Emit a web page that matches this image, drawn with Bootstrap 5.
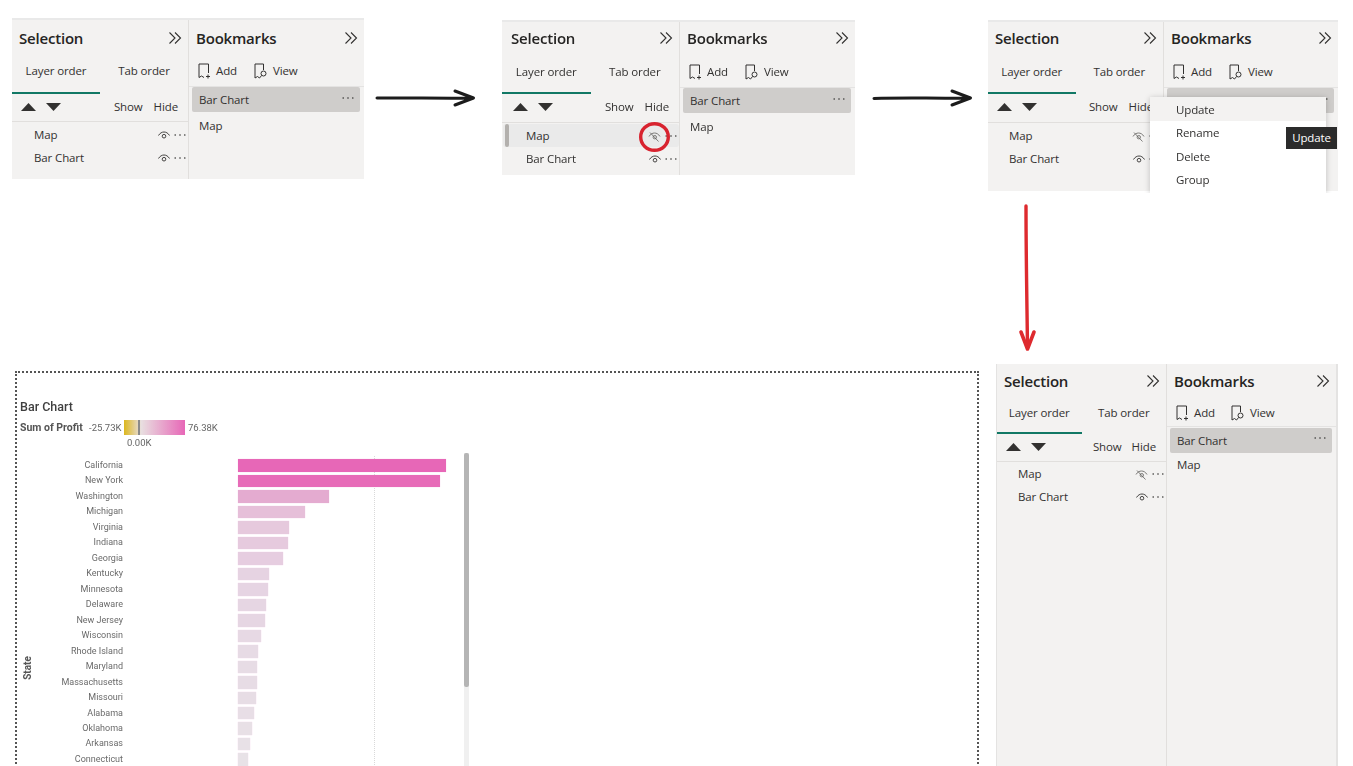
<!DOCTYPE html>
<html lang="en">
<head>
<meta charset="utf-8">
<title>Bookmarks workflow</title>
<link rel="stylesheet" href="https://cdn.jsdelivr.net/npm/bootstrap@5.3.0/dist/css/bootstrap.min.css">
<style>
html,body{margin:0;background:#fff;overflow:hidden}
.desk{position:relative;width:1353px;height:766px;overflow:hidden;font-family:"Open Sans","Noto Sans",sans-serif;color:#323130;filter:blur(.35px)}
.pbi{position:absolute;background:#f3f2f1;border-top:2px solid #e9e9e9;overflow:hidden;font-size:11.5px;letter-spacing:-.12px}
.pbi-a{left:12px;top:18px;width:352px;height:161px}
.pbi-b{left:502px;top:20px;width:353px;height:155px}
.pbi-c{left:988px;top:20px;width:350px;height:171px;overflow:visible}
.pbi-d{left:996px;top:364px;width:342px;height:402px;border-top:0;border-left:1px solid #e4e3e2;border-right:2px solid #e4e3e2}
.pane-sel{width:177px;flex:none;border-right:1px solid #e1dfdd}
.pane-book{flex:1 1 auto;min-width:0}
.pbi-b .pane-sel{width:178px}
.pbi-c .pane-sel{width:176px}
.pbi-d .pane-sel{width:170px}
.pane-head{height:36px;padding:0 6px 0 7px;flex:none}
.pane-book .pane-head{padding:0 6px 0 7px}
.pbi-b .pane-head,.pbi-c .pane-head{padding-bottom:4px}
.pbi-b .pane-sel .pane-head{padding-left:9px}
.pane-name{font-size:15px;font-weight:600;letter-spacing:-.2px;color:#252423}
.tabs-row{height:38px;flex:none}
.pbi-b .tabs-row,.pbi-c .tabs-row{height:36px}
.tab-one{flex:1 1 50%;display:flex;align-items:center;justify-content:center;padding-bottom:6px;border-bottom:2px solid transparent}
.pbi-d .tab-one{padding-bottom:4px}
.tab-one.is-on{border-bottom-color:#117865}
.ctl-row{height:28px;flex:none;padding:0 10px 2px 9px;border-bottom:1px solid #e1dfdd}
.pbi-b .ctl-row,.pbi-c .ctl-row{height:29px;padding-bottom:2px}
.pbi-d .ctl-row{padding-bottom:2px}
.pbi-b .ctl-row{padding-left:11px}
.ctl-row .gap-show{margin-right:11px}
.pbi-d .gap-show{margin-right:10px!important}
.tri{margin-right:10px}
.layer-row{height:23px;margin:1px 0 0;padding:1px 2px 0 22px;position:relative}
.layer-row+.layer-row{margin-top:0}
.pbi-b .layer-row{padding-left:24px}
.pbi-c .layer-row{padding-left:21px}
.pbi-d .layer-row{padding-left:21px;margin-top:0}
.layer-row.is-hot{background:#eaeaea;border-radius:3px;margin-left:1px;padding-left:23px}
.layer-row.is-hot::before{content:"";position:absolute;left:2px;top:0;bottom:0;width:4px;background:#b3b0ad;border-radius:2px}
.add-row{height:30px;flex:none;padding:0 0 0 9px;border-bottom:1px solid #e4e3e2;gap:17px}
.pbi-a .add-row{height:31px}
.pbi-b .add-row,.pbi-c .add-row{padding-bottom:2px}
.add-one{gap:5px}
.mark-list{--bs-list-group-bg:transparent;--bs-list-group-border-width:0;border-radius:0}
.mark-row{height:25px;padding:0 6px 0 7px;margin:0 4px 0 3px;background:transparent;color:#323130;font-size:11.500px}
.mark-row.is-on{background:#cfcdcb;border-radius:2px}
.mark-row+.mark-row{height:27px;padding-top:0}
.pbi-d .pane-head{height:34px}
.pbi-d .tabs-row{height:36px}
.pbi-d .add-row{height:29px;padding-top:2px;gap:16px}
.pbi-d .mark-list{margin-top:1px}
.pbi-d .mark-row{height:24.500px}
.pbi-d .mark-row+.mark-row{height:25px}
.pbi-menu{position:absolute;left:162px;top:75px;width:176px;height:96px;padding:0;margin:0;border:0;border-radius:0;background:#fff;box-shadow:0 1px 6px rgba(0,0,0,.22);clip-path:inset(-8px -8px 0 -8px);min-width:0;display:block;font-size:11.500px;z-index:2}
.pbi-menu .dropdown-item{height:23.500px;padding:0 0 0 26px;display:flex;align-items:center;color:#323130;font-size:11.500px;letter-spacing:-.12px}
.pbi-menu .dropdown-item.is-hot{background:#f3f2f1;height:24px;padding-top:2px}
.pbi-tip{position:absolute;left:298px;top:105px;width:51px;height:22px;background:#2b2b2b;color:#fff;display:flex;align-items:center;justify-content:center;font-size:11.500px;z-index:3}
.flow-arrow{position:absolute;overflow:visible;stroke-linejoin:round;stroke-linecap:round}
.ring{position:absolute;left:639px;top:122px;overflow:visible;z-index:4}
.viz{position:absolute;left:15px;top:371px;width:964px;height:420px;border:2px dotted #555;padding:26px 0 0 3px;font-family:Roboto,"Liberation Sans",sans-serif;color:#666}
.viz-name{font-size:12.5px;line-height:16px;font-weight:500;color:#3f3f3f}
.legend-row{height:15px;margin-top:5px;font-size:9.5px;line-height:15px}
.legend-name{width:69px;font-size:10.5px;font-weight:700;color:#555}
.legend-min{width:35px}
.legend-ramp{position:relative;width:61px;height:15px;margin-right:3px;background:linear-gradient(90deg,#dcb71e 0,#e8dfe0 28%,#e767b7 100%)}
.legend-ramp::after{content:"";position:absolute;left:14px;top:0;bottom:0;width:2px;background:#8a8a8a}
.legend-zero{height:12px;margin:2px 0 0 107px;font-size:9.5px;line-height:12px}
.bars{position:relative;z-index:1;margin-top:9px}
.bar-line{height:15.47px}
.bar-name{width:103px;flex:none;text-align:right;font-size:9px;line-height:15.47px;color:#6a6a6a}
.bar-fill{height:12.5px;margin-left:115px;box-shadow:0 0 1px rgba(231,103,183,.35)}
.state-name{position:absolute;left:-1px;top:289px;font-size:10px;font-weight:700;color:#555;transform:rotate(-90deg);line-height:12px}
.guide{position:absolute;left:356.5px;top:83px;bottom:0;border-left:1px dotted #d9d9d9}
.rail{position:absolute;left:447px;top:80px;bottom:0;width:5px;background:#f0f0f0}
.rail-thumb{height:234px;background:#b5b5b5;border-radius:2px}
</style>
</head>
<body>
<svg width="0" height="0" class="d-block" aria-hidden="true">
<defs>
<symbol id="i-chev" viewBox="0 0 14 14"><path d="M1.5 1.5 7 7l-5.500 5.500M7 1.500 12.500 7 7 12.500" fill="none" stroke="currentColor" stroke-width="1.100"/></symbol>
<symbol id="i-up" viewBox="0 0 15 8"><path d="M7.500 0 15 8H0z" fill="currentColor"/></symbol>
<symbol id="i-down" viewBox="0 0 15 8"><path d="M0 0h15L7.500 8z" fill="currentColor"/></symbol>
<symbol id="i-add" viewBox="0 0 13 16"><path d="M1 14.500V1h9.500v9M1 14.500 3.500 13 6 14.500" fill="none" stroke="currentColor" stroke-width="1"/><path d="M10 11.500v4M8 13.500h4" stroke="currentColor" stroke-width="1"/></symbol>
<symbol id="i-view" viewBox="0 0 14 16"><path d="M1 15V1h8.500v6M1 15l2.500-1.500L5.500 15" fill="none" stroke="currentColor" stroke-width="1"/><circle cx="9.500" cy="10.500" r="2.500" fill="none" stroke="currentColor"/><path d="M7.700 12.400 5.500 15" stroke="currentColor"/></symbol>
<symbol id="i-eye" viewBox="0 0 12 8"><path d="M.5 4.500C2 2 4 1 6 1s4 1 5.500 3.500" fill="none" stroke="currentColor" stroke-width=".9"/><circle cx="6" cy="5.200" r="1.800" fill="none" stroke="currentColor" stroke-width=".9"/></symbol>
<symbol id="i-eyeoff" viewBox="0 0 13 11"><path d="M1 5.500C2.500 3 4.500 2 6.500 2s4 1 5.500 3.500" fill="none" stroke="#605e5c" stroke-width=".8"/><circle cx="6.800" cy="6.200" r="1.700" fill="none" stroke="#605e5c" stroke-width=".8"/><path d="M2 1.500 10.500 10.500" fill="none" stroke="#605e5c" stroke-width=".8"/></symbol>
<symbol id="i-dots" viewBox="0 0 12 2"><g fill="currentColor"><circle cx="1.200" cy="1" r=".8"/><circle cx="6" cy="1" r=".8"/><circle cx="10.800" cy="1" r=".8"/></g></symbol>
</defs>
</svg>
<main class="desk">

<section class="pbi pbi-a d-flex">
  <div class="pane-sel d-flex flex-column">
    <div class="pane-head d-flex align-items-center justify-content-between"><span class="pane-name">Selection</span><svg width="14" height="14"><use href="#i-chev"/></svg></div>
    <div class="tabs-row d-flex"><div class="tab-one is-on">Layer order</div><div class="tab-one">Tab order</div></div>
    <div class="ctl-row d-flex align-items-center"><svg class="tri" width="15" height="8"><use href="#i-up"/></svg><svg width="15" height="8"><use href="#i-down"/></svg><span class="ms-auto gap-show">Show</span><span>Hide</span></div>
    <div class="layer-row d-flex align-items-center gap-1"><span class="me-auto">Map</span><svg width="12" height="8"><use href="#i-eye"/></svg><svg width="12" height="2"><use href="#i-dots"/></svg></div>
    <div class="layer-row d-flex align-items-center gap-1"><span class="me-auto">Bar Chart</span><svg width="12" height="8"><use href="#i-eye"/></svg><svg width="12" height="2"><use href="#i-dots"/></svg></div>
  </div>
  <div class="pane-book d-flex flex-column">
    <div class="pane-head d-flex align-items-center justify-content-between"><span class="pane-name">Bookmarks</span><svg width="14" height="14"><use href="#i-chev"/></svg></div>
    <div class="add-row d-flex align-items-center"><span class="add-one d-flex align-items-center"><svg width="13" height="16"><use href="#i-add"/></svg>Add</span><span class="add-one d-flex align-items-center"><svg width="14" height="16"><use href="#i-view"/></svg>View</span></div>
    <div class="list-group mark-list">
      <div class="list-group-item mark-row is-on d-flex align-items-center justify-content-between"><span>Bar Chart</span><svg width="12" height="2" class="mb-1"><use href="#i-dots"/></svg></div>
      <div class="list-group-item mark-row d-flex align-items-center"><span>Map</span></div>
    </div>
  </div>
</section>

<svg class="flow-arrow" style="left:377px;top:89px" width="98" height="18" viewBox="0 0 98 18"><path d="M0 9C30 8.500 60 9.500 96 9M78 2 96.500 9 78 16" fill="none" stroke="#1c1c1c" stroke-width="3"/></svg>

<section class="pbi pbi-b d-flex">
  <div class="pane-sel d-flex flex-column">
    <div class="pane-head d-flex align-items-center justify-content-between"><span class="pane-name">Selection</span><svg width="14" height="14"><use href="#i-chev"/></svg></div>
    <div class="tabs-row d-flex"><div class="tab-one is-on">Layer order</div><div class="tab-one">Tab order</div></div>
    <div class="ctl-row d-flex align-items-center"><svg class="tri" width="15" height="8"><use href="#i-up"/></svg><svg width="15" height="8"><use href="#i-down"/></svg><span class="ms-auto gap-show">Show</span><span>Hide</span></div>
    <div class="layer-row is-hot d-flex align-items-center gap-1"><span class="me-auto">Map</span><svg width="13" height="11"><use href="#i-eyeoff"/></svg><svg width="12" height="2"><use href="#i-dots"/></svg></div>
    <div class="layer-row d-flex align-items-center gap-1"><span class="me-auto">Bar Chart</span><svg width="12" height="8"><use href="#i-eye"/></svg><svg width="12" height="2"><use href="#i-dots"/></svg></div>
  </div>
  <div class="pane-book d-flex flex-column">
    <div class="pane-head d-flex align-items-center justify-content-between"><span class="pane-name">Bookmarks</span><svg width="14" height="14"><use href="#i-chev"/></svg></div>
    <div class="add-row d-flex align-items-center"><span class="add-one d-flex align-items-center"><svg width="13" height="16"><use href="#i-add"/></svg>Add</span><span class="add-one d-flex align-items-center"><svg width="14" height="16"><use href="#i-view"/></svg>View</span></div>
    <div class="list-group mark-list">
      <div class="list-group-item mark-row is-on d-flex align-items-center justify-content-between"><span>Bar Chart</span><svg width="12" height="2" class="mb-1"><use href="#i-dots"/></svg></div>
      <div class="list-group-item mark-row d-flex align-items-center"><span>Map</span></div>
    </div>
  </div>
</section>
<svg class="ring" width="31" height="30" viewBox="0 0 31 30"><ellipse cx="15.500" cy="15" rx="13.800" ry="13.300" fill="none" stroke="#d8232f" stroke-width="3.400"/></svg>

<svg class="flow-arrow" style="left:874px;top:89px" width="98" height="18" viewBox="0 0 98 18"><path d="M0 9.500C30 8.500 60 9.500 96 9M78 2 96.500 9 78 16" fill="none" stroke="#1c1c1c" stroke-width="3"/></svg>

<section class="pbi pbi-c d-flex">
  <div class="pane-sel d-flex flex-column">
    <div class="pane-head d-flex align-items-center justify-content-between"><span class="pane-name">Selection</span><svg width="14" height="14"><use href="#i-chev"/></svg></div>
    <div class="tabs-row d-flex"><div class="tab-one is-on">Layer order</div><div class="tab-one">Tab order</div></div>
    <div class="ctl-row d-flex align-items-center"><svg class="tri" width="15" height="8"><use href="#i-up"/></svg><svg width="15" height="8"><use href="#i-down"/></svg><span class="ms-auto gap-show">Show</span><span>Hide</span></div>
    <div class="layer-row d-flex align-items-center gap-1"><span class="me-auto">Map</span><svg width="13" height="11"><use href="#i-eyeoff"/></svg><svg width="12" height="2"><use href="#i-dots"/></svg></div>
    <div class="layer-row d-flex align-items-center gap-1"><span class="me-auto">Bar Chart</span><svg width="12" height="8"><use href="#i-eye"/></svg><svg width="12" height="2"><use href="#i-dots"/></svg></div>
  </div>
  <div class="pane-book d-flex flex-column">
    <div class="pane-head d-flex align-items-center justify-content-between"><span class="pane-name">Bookmarks</span><svg width="14" height="14"><use href="#i-chev"/></svg></div>
    <div class="add-row d-flex align-items-center"><span class="add-one d-flex align-items-center"><svg width="13" height="16"><use href="#i-add"/></svg>Add</span><span class="add-one d-flex align-items-center"><svg width="14" height="16"><use href="#i-view"/></svg>View</span></div>
    <div class="list-group mark-list">
      <div class="list-group-item mark-row is-on d-flex align-items-center justify-content-between"><span>Bar Chart</span><svg width="12" height="2" class="mb-1"><use href="#i-dots"/></svg></div>
      <div class="list-group-item mark-row d-flex align-items-center"><span>Map</span></div>
    </div>
  </div>
  <div class="dropdown-menu pbi-menu">
    <div class="dropdown-item is-hot">Update</div>
    <div class="dropdown-item">Rename</div>
    <div class="dropdown-item">Delete</div>
    <div class="dropdown-item">Group</div>
  </div>
  <div class="pbi-tip">Update</div>
</section>

<svg class="flow-arrow" style="left:1016px;top:205px" width="22" height="148" viewBox="0 0 22 148"><path d="M10 1C10 50 11 100 11.500 143" fill="none" stroke="#de2a2e" stroke-width="3.400"/><path d="M5 127 11.500 144 18 127" fill="none" stroke="#de2a2e" stroke-width="3.600"/></svg>

<section class="viz">
  <div class="viz-name">Bar Chart</div>
  <div class="legend-row d-flex">
    <span class="legend-name">Sum of Profit</span><span class="legend-min">-25.73K</span><span class="legend-ramp"></span><span>76.38K</span>
  </div>
  <div class="legend-zero">0.00K</div>
  <div class="bars">
    <div class="bar-line d-flex align-items-center"><span class="bar-name">California</span><span class="bar-fill" style="width:208px;background:#e767b7"></span></div>
    <div class="bar-line d-flex align-items-center"><span class="bar-name">New York</span><span class="bar-fill" style="width:202px;background:#e76bb8"></span></div>
    <div class="bar-line d-flex align-items-center"><span class="bar-name">Washington</span><span class="bar-fill" style="width:91px;background:#e4abd0"></span></div>
    <div class="bar-line d-flex align-items-center"><span class="bar-name">Michigan</span><span class="bar-fill" style="width:67px;background:#e6bfd9"></span></div>
    <div class="bar-line d-flex align-items-center"><span class="bar-name">Virginia</span><span class="bar-fill" style="width:51px;background:#e6c9dd"></span></div>
    <div class="bar-line d-flex align-items-center"><span class="bar-name">Indiana</span><span class="bar-fill" style="width:50px;background:#e6cade"></span></div>
    <div class="bar-line d-flex align-items-center"><span class="bar-name">Georgia</span><span class="bar-fill" style="width:44.500px;background:#e6cde0"></span></div>
    <div class="bar-line d-flex align-items-center"><span class="bar-name">Kentucky</span><span class="bar-fill" style="width:31px;background:#e6d3e2"></span></div>
    <div class="bar-line d-flex align-items-center"><span class="bar-name">Minnesota</span><span class="bar-fill" style="width:30px;background:#e6d4e3"></span></div>
    <div class="bar-line d-flex align-items-center"><span class="bar-name">Delaware</span><span class="bar-fill" style="width:27.500px;background:#e6d6e3"></span></div>
    <div class="bar-line d-flex align-items-center"><span class="bar-name">New Jersey</span><span class="bar-fill" style="width:27px;background:#e6d6e3"></span></div>
    <div class="bar-line d-flex align-items-center"><span class="bar-name">Wisconsin</span><span class="bar-fill" style="width:23px;background:#e7d9e4"></span></div>
    <div class="bar-line d-flex align-items-center"><span class="bar-name">Rhode Island</span><span class="bar-fill" style="width:20px;background:#e7dbe5"></span></div>
    <div class="bar-line d-flex align-items-center"><span class="bar-name">Maryland</span><span class="bar-fill" style="width:19px;background:#e7dce5"></span></div>
    <div class="bar-line d-flex align-items-center"><span class="bar-name">Massachusetts</span><span class="bar-fill" style="width:18.500px;background:#e7dce5"></span></div>
    <div class="bar-line d-flex align-items-center"><span class="bar-name">Missouri</span><span class="bar-fill" style="width:18px;background:#e7dde5"></span></div>
    <div class="bar-line d-flex align-items-center"><span class="bar-name">Alabama</span><span class="bar-fill" style="width:16px;background:#e8dee6"></span></div>
    <div class="bar-line d-flex align-items-center"><span class="bar-name">Oklahoma</span><span class="bar-fill" style="width:13.500px;background:#e8e0e6"></span></div>
    <div class="bar-line d-flex align-items-center"><span class="bar-name">Arkansas</span><span class="bar-fill" style="width:11.500px;background:#e8e1e7"></span></div>
    <div class="bar-line d-flex align-items-center"><span class="bar-name">Connecticut</span><span class="bar-fill" style="width:10px;background:#e8e2e7"></span></div>
  </div>
  <span class="state-name">State</span>
  <div class="guide"></div>
  <div class="rail"><div class="rail-thumb"></div></div>
</section>

<section class="pbi pbi-d d-flex">
  <div class="pane-sel d-flex flex-column">
    <div class="pane-head d-flex align-items-center justify-content-between"><span class="pane-name">Selection</span><svg width="14" height="14"><use href="#i-chev"/></svg></div>
    <div class="tabs-row d-flex"><div class="tab-one is-on">Layer order</div><div class="tab-one">Tab order</div></div>
    <div class="ctl-row d-flex align-items-center"><svg class="tri" width="15" height="8"><use href="#i-up"/></svg><svg width="15" height="8"><use href="#i-down"/></svg><span class="ms-auto gap-show">Show</span><span>Hide</span></div>
    <div class="layer-row d-flex align-items-center gap-1"><span class="me-auto">Map</span><svg width="13" height="11"><use href="#i-eyeoff"/></svg><svg width="12" height="2"><use href="#i-dots"/></svg></div>
    <div class="layer-row d-flex align-items-center gap-1"><span class="me-auto">Bar Chart</span><svg width="12" height="8"><use href="#i-eye"/></svg><svg width="12" height="2"><use href="#i-dots"/></svg></div>
  </div>
  <div class="pane-book d-flex flex-column">
    <div class="pane-head d-flex align-items-center justify-content-between"><span class="pane-name">Bookmarks</span><svg width="14" height="14"><use href="#i-chev"/></svg></div>
    <div class="add-row d-flex align-items-center"><span class="add-one d-flex align-items-center"><svg width="13" height="16"><use href="#i-add"/></svg>Add</span><span class="add-one d-flex align-items-center"><svg width="14" height="16"><use href="#i-view"/></svg>View</span></div>
    <div class="list-group mark-list">
      <div class="list-group-item mark-row is-on d-flex align-items-center justify-content-between"><span>Bar Chart</span><svg width="12" height="2" class="mb-1"><use href="#i-dots"/></svg></div>
      <div class="list-group-item mark-row d-flex align-items-center"><span>Map</span></div>
    </div>
  </div>
</section>

</main>
<script src="https://cdn.jsdelivr.net/npm/bootstrap@5.3.0/dist/js/bootstrap.bundle.min.js"></script>
</body>
</html>
